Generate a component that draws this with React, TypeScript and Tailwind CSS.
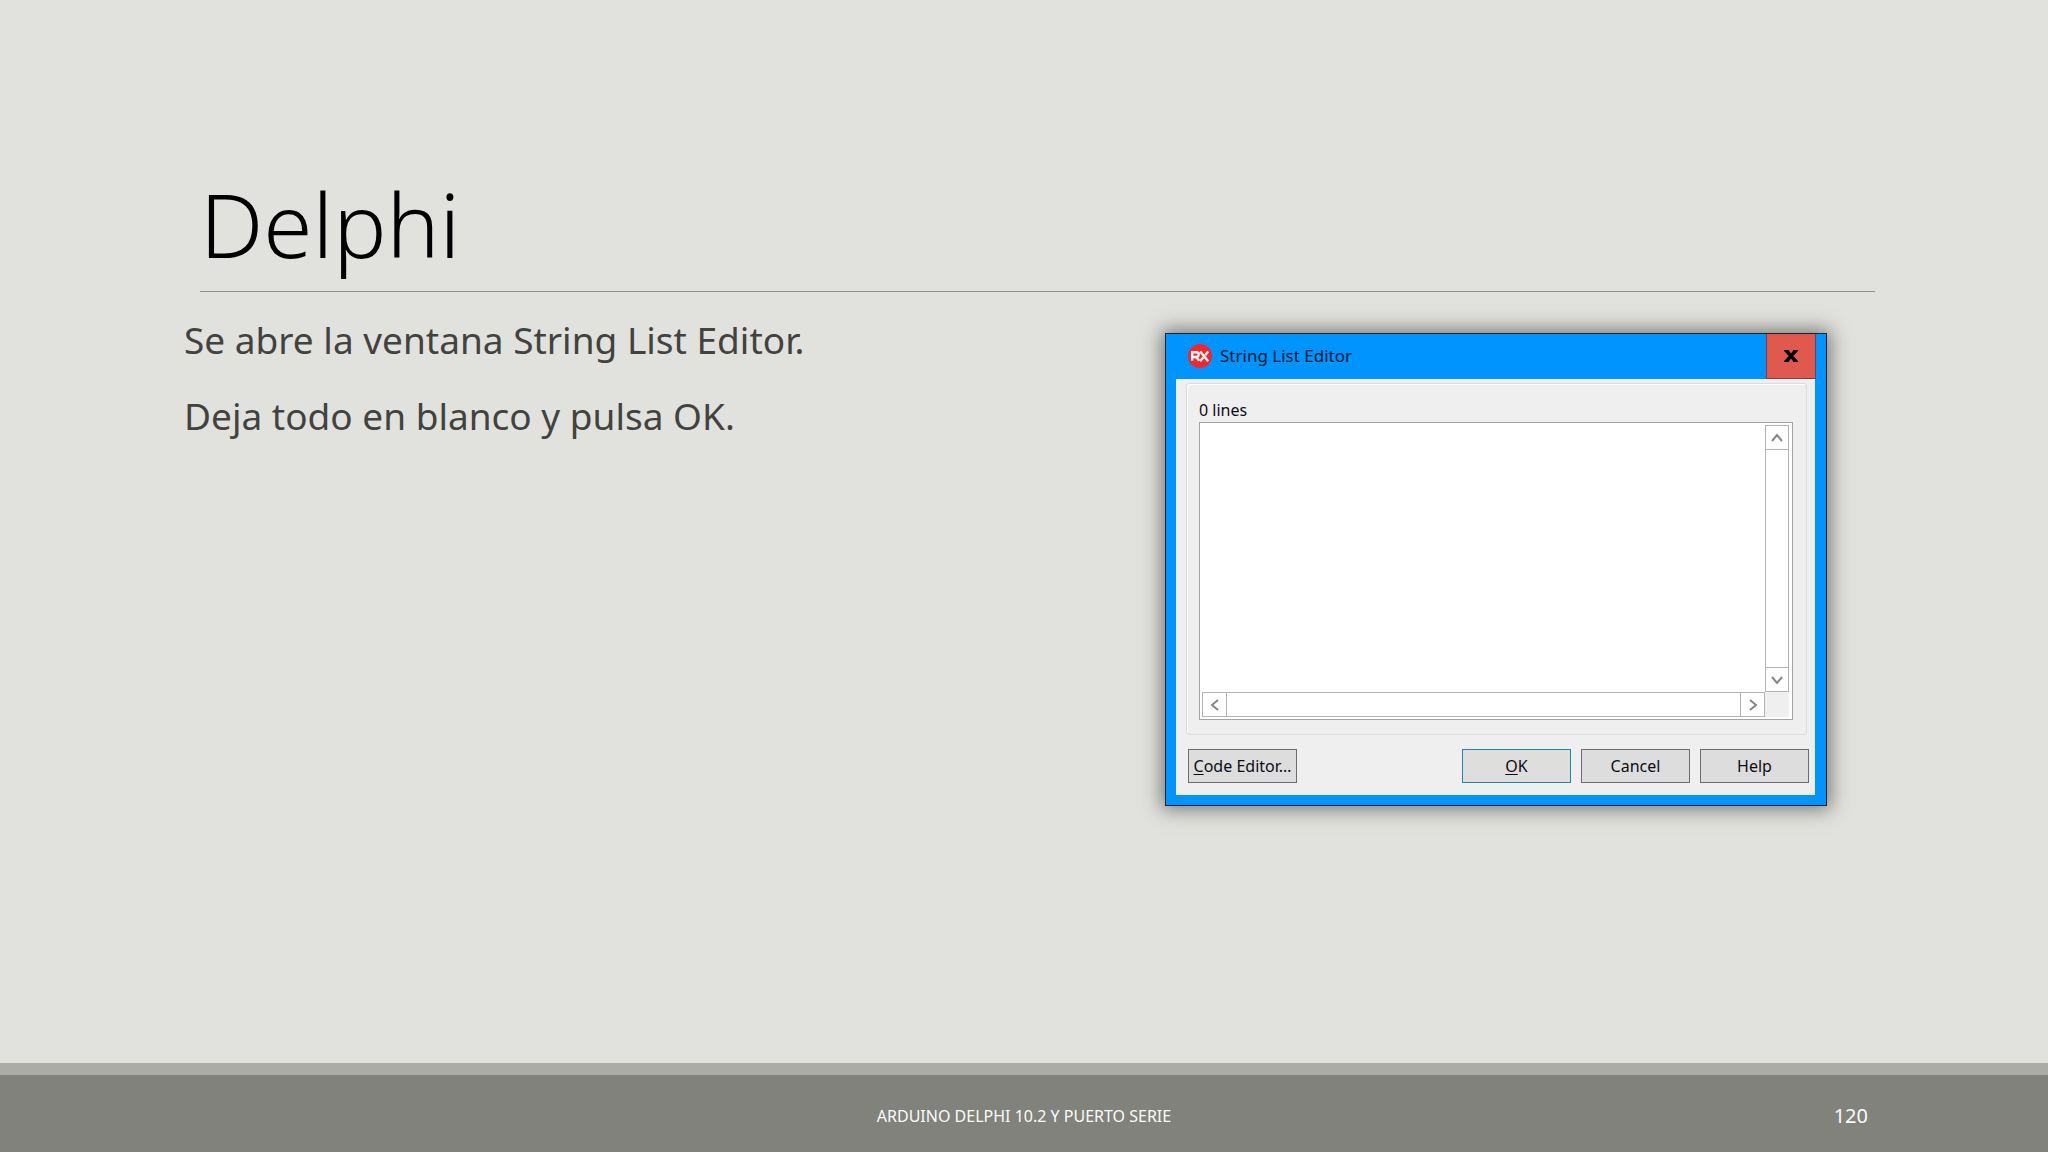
import type { ReactNode } from "react";

function Chevron({ d }: { d: string }) {
  return (
    <svg viewBox="0 0 12 12" className="size-3" fill="none" stroke="#85858b" strokeWidth="2" aria-hidden="true">
      <path d={d} />
    </svg>
  );
}

function ScrollButton({ label, d, className }: { label: string; d: string; className: string }) {
  return (
    <button
      type="button"
      aria-label={label}
      className={`flex shrink-0 items-center justify-center border-[#b4b4b8] bg-white ${className}`}
    >
      <Chevron d={d} />
    </button>
  );
}

function DialogButton({ children, primary = false }: { children: ReactNode; primary?: boolean }) {
  return (
    <button
      type="button"
      className={`h-[34px] w-[109px] border whitespace-nowrap text-[16px] leading-5 text-[#0c0c14] ${
        primary ? "border-[#1b87ab] bg-[#dededc]" : "border-[#6c6c70] bg-[#dddddd]"
      }`}
    >
      {children}
    </button>
  );
}

function Logo() {
  return (
    <svg viewBox="0 0 24 24" className="size-6" aria-hidden="true">
      <circle cx="12" cy="12" r="12" fill="#fb2327" />
      <g fill="none" stroke="#fff" strokeWidth="2.4">
        <path d="M4.2 16.8V8.2h4.1a2.4 2.4 0 0 1 0 4.8H4.2M8.2 13l3 3.8" />
        <path d="M12.2 7.6l8 9.6M20.2 7.6l-3 3.6M15.2 13.6l-3 3.6" />
      </g>
    </svg>
  );
}

function StringListEditor() {
  return (
    <section
      aria-labelledby="editor-title"
      className="w-[662px] border border-[#10202c] bg-[#0094ff] pb-[10px] text-[#0c0c14] shadow-[0_0_18px_3px_rgba(60,58,54,0.65)]"
    >
      <header className="flex h-[45px] justify-between pr-[10px] pl-[22px]">
        <div className="flex items-center gap-2 pb-[2px]">
          <Logo />
          <h2 id="editor-title" className="text-[17px] leading-6 text-[#04182c]">
            String List Editor
          </h2>
        </div>
        <button
          type="button"
          aria-label="Close"
          className="flex w-[50px] items-center justify-center border border-t-0 border-[#7a4048] bg-[#df594e]"
        >
          <svg viewBox="0 0 14 12" className="h-3 w-[14px]" aria-hidden="true">
            <path d="M0 0h4.500L7 3.400 9.500 0H14v1L9.200 6l4.800 5v1H9.500L7 8.600 4.500 12H0v-1l4.800-5L0 1z" fill="#000" />
          </svg>
        </button>
      </header>

      <div className="mr-[11px] ml-[10px] bg-[#f0eff0] pt-1 pr-2 pb-3 pl-[10px]">
        <div className="rounded-[3px] border border-[#d9dde0] pt-[15px] pr-[13px] pb-[14px] pl-3 shadow-[inset_1px_1px_0_#fff]">
          <label htmlFor="lines" className="block pb-px text-[16px] leading-[22px]">
            0 lines
          </label>
          <div className="flex flex-col border border-[#a3a3a6] bg-white p-[2px] pr-[3px]">
            <div className="flex h-[267px]">
              <textarea id="lines" className="min-w-0 flex-1 resize-none bg-white outline-none" />
              <div className="flex w-6 flex-col justify-between border border-[#b4b4b8]">
                <ScrollButton label="Scroll up" d="M1 9l5-6 5 6" className="h-6 border-b" />
                <ScrollButton label="Scroll down" d="M1 3l5 6 5-6" className="h-6 border-t" />
              </div>
            </div>
            <div className="flex h-[25px]">
              <div className="flex flex-1 justify-between border border-[#b4b4b8]">
                <ScrollButton label="Scroll left" d="M9 1L3 6l6 5" className="w-6 border-r" />
                <ScrollButton label="Scroll right" d="M3 1l6 5-6 5" className="w-6 border-l" />
              </div>
              <div className="w-6 bg-[#f0eff0]" />
            </div>
          </div>
        </div>
        <div className="-mr-[2px] flex gap-[10px] pt-[14px] pl-[2px]">
          <DialogButton>
            <span className="underline underline-offset-2">C</span>ode Editor…
          </DialogButton>
          <div className="flex-1" />
          <DialogButton primary>
            <span className="underline underline-offset-2">O</span>K
          </DialogButton>
          <DialogButton>Cancel</DialogButton>
          <DialogButton>Help</DialogButton>
        </div>
      </div>
    </section>
  );
}

export default function App() {
  return (
    <div className="flex min-h-screen flex-col bg-[#e1e2dd] font-['Noto_Sans',sans-serif]">
      <main className="flex-1 pt-[166px] pb-12">
        <h1 className="mr-[173px] ml-[200px] border-b border-[#8f908b] pb-[10px] text-[89px] leading-[115px] font-light text-black">
          Delphi
        </h1>
        <div className="flex items-start justify-between gap-8 pr-[221px] pl-[184px]">
          <div className="space-y-7 pt-6 text-[37px] leading-[48px] text-[#42433e]">
            <p>Se abre la ventana String List Editor.</p>
            <p>Deja todo en blanco y pulsa OK.</p>
          </div>
          <div className="shrink-0 pt-[41px]">
            <StringListEditor />
          </div>
        </div>
      </main>
      <footer className="grid h-[89px] grid-cols-3 items-center border-t-[12px] border-[#abaca6] bg-[#81827c] px-[180px] text-[#fbfbf8]">
        <p className="col-start-2 pt-1 text-center text-[16px] leading-6 uppercase">Arduino Delphi 10.2 y puerto serie</p>
        <p className="pt-1 text-right text-[20px] leading-6">120</p>
      </footer>
    </div>
  );
}
